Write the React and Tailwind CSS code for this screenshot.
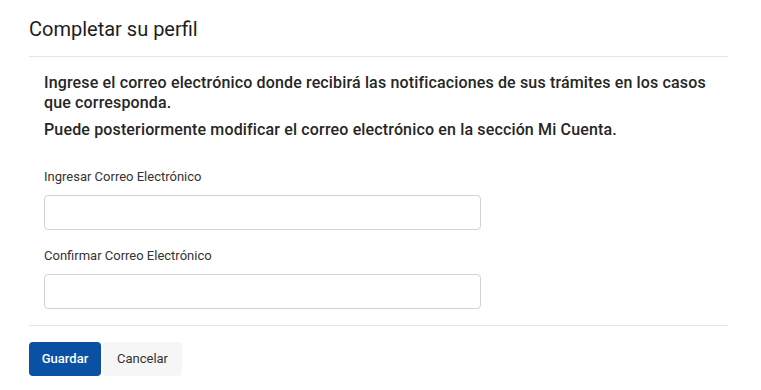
export default function App() {
  return (
    <div className="min-h-[390px] bg-white font-['Roboto',sans-serif] text-[#212529]">
      <div className="w-[699px] ml-[29px]">
        <div className="h-[57px] border-b border-[#e5e5e5] pt-[15px]">
          <h1 className="text-[20px] leading-[28px] font-normal text-[#1d1d1d]">Completar su perfil</h1>
        </div>
        <div className="pl-[15px] pt-[16px] pb-[16px] border-b border-[#e5e5e5]">
          <p className="max-w-[670px] text-[16px] leading-[20px] font-medium tracking-[0.15px] text-[#262626]">
            Ingrese el correo electrónico donde recibirá las notificaciones de sus trámites en los casos que corresponda.
          </p>
          <p className="mt-[7px] text-[16px] leading-[20px] font-medium tracking-[0.15px] text-[#262626]">
            Puede posteriormente modificar el correo electrónico en la sección Mi Cuenta.
          </p>
          <label className="block mt-[27px] text-[13px] leading-[20px] text-[#333]">Ingresar Correo Electrónico</label>
          <input className="block mt-[8px] w-[437px] h-[35px] rounded-[4px] border border-[#d2d2d2] bg-white px-3 outline-none" />
          <label className="block mt-[16px] text-[13px] leading-[20px] text-[#333]">Confirmar Correo Electrónico</label>
          <input className="block mt-[8px] w-[437px] h-[35px] rounded-[4px] border border-[#d2d2d2] bg-white px-3 outline-none" />
        </div>
        <div className="flex gap-[2px] pt-[16px]">
          <button className="h-[34px] w-[72px] rounded-[4px] bg-[#0b51a3] text-white text-[13px] font-medium">Guardar</button>
          <button className="h-[34px] w-[79px] rounded-[4px] bg-[#f6f6f6] text-[#333] text-[13px]">Cancelar</button>
        </div>
      </div>
    </div>
  );
}
